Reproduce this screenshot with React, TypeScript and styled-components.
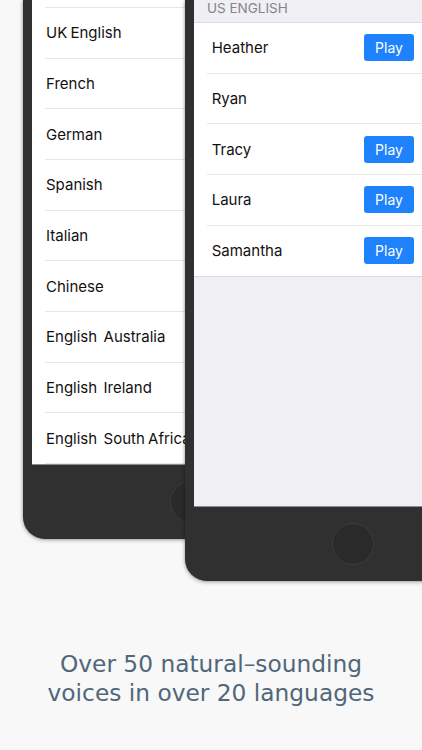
import styled, { createGlobalStyle } from "styled-components";

const GlobalStyle = createGlobalStyle`
  html, body {
    margin: 0;
    padding: 0;
    background: #f8f8f9;
  }
  body {
    width: 422px;
    height: 750px;
    overflow: hidden;
    font-family: "Inter", "Liberation Sans", sans-serif;
  }
`;

const languages = [
  "",
  "UK English",
  "French",
  "German",
  "Spanish",
  "Italian",
  "Chinese",
  "English  Australia",
  "English  Ireland",
  "English  South Africa",
];

const voices = [
  { name: "Heather", play: true },
  { name: "Ryan", play: false },
  { name: "Tracy", play: true },
  { name: "Laura", play: true },
  { name: "Samantha", play: true },
];

export default function App() {
  return (
    <>
      <GlobalStyle />
      <Page>
        <Stage>
          <Phone $height={539} $back>
            <Screen $height={465} $bg="#ffffff">
              <LangList>
                {languages.map((l, i) => (
                  <LangRow key={i}>{l}</LangRow>
                ))}
              </LangList>
            </Screen>
            <Bezel>
              <HomeButton />
            </Bezel>
          </Phone>
          <Phone $height={581}>
            <Screen $height={507} $bg="#efeff4">
              <SectionHeader>US ENGLISH</SectionHeader>
              <VoiceList>
                {voices.map((v) => (
                  <VoiceRow key={v.name}>
                    <VoiceName>{v.name}</VoiceName>
                    {v.play && <PlayButton>Play</PlayButton>}
                  </VoiceRow>
                ))}
              </VoiceList>
            </Screen>
            <Bezel>
              <HomeButton />
            </Bezel>
          </Phone>
        </Stage>
        <Caption>
          Over 50 natural–sounding
          <br />
          voices in over 20 languages
        </Caption>
      </Page>
    </>
  );
}

const Page = styled.div`
  width: 422px;
  height: 750px;
  display: flex;
  flex-direction: column;
`;

const Stage = styled.div`
  height: 600px;
  display: flex;
  align-items: flex-start;
  padding-left: 23px;
  overflow: hidden;
  flex: none;
`;

const Phone = styled.div<{ $height: number; $back?: boolean }>`
  flex: none;
  width: 335px;
  height: ${(p) => p.$height}px;
  margin-right: ${(p) => (p.$back ? "-173px" : "0")};
  z-index: ${(p) => (p.$back ? 0 : 1)};
  box-sizing: border-box;
  padding: 0 9px;
  background: #303030;
  border-radius: 0 0 22px 22px;
  box-shadow: 0 1px 4px rgba(0, 0, 0, 0.35), 0 0 2px rgba(0, 0, 0, 0.2);
  display: flex;
  flex-direction: column;
`;

const Screen = styled.div<{ $height: number; $bg: string }>`
  flex: none;
  height: ${(p) => p.$height}px;
  background: ${(p) => p.$bg};
  overflow: hidden;
  border-bottom: 1px solid #8d8d90;
  box-sizing: border-box;
`;

const Bezel = styled.div`
  flex: 1;
  display: flex;
  align-items: center;
  justify-content: center;
`;

const HomeButton = styled.div`
  width: 40px;
  height: 40px;
  border-radius: 50%;
  background: #2a2a2a;
  border: 1px solid #3b3b3b;
`;

const LangList = styled.div`
  padding-top: 6px;
  border-top: 1px solid transparent;
`;

const LangRow = styled.div`
  height: 50.67px;
  box-sizing: border-box;
  margin-left: 13px;
  padding-left: 1px;
  border-bottom: 1px solid #e6e6e8;
  display: flex;
  align-items: center;
  white-space: pre;
  font-size: 15px;
  word-spacing: -1px;
  color: #111111;
  &:first-child {
    height: 1px;
  }
`;

const SectionHeader = styled.div`
  height: 23px;
  box-sizing: border-box;
  padding-left: 13px;
  font-size: 13.5px;
  line-height: 16px;
  color: #85858a;
  border-bottom: 1px solid #dedee2;
`;

const VoiceList = styled.div`
  background: #ffffff;
  border-bottom: 1px solid #dcdce0;
`;

const VoiceRow = styled.div`
  height: 50.67px;
  box-sizing: border-box;
  margin-left: 12.7px;
  display: grid;
  grid-template-columns: 157.3px 50px;
  align-items: center;
  border-bottom: 1px solid #e6e6e8;
  &:last-child {
    border-bottom: none;
  }
`;

const VoiceName = styled.span`
  padding-left: 5px;
  font-size: 15px;
  color: #111111;
`;

const PlayButton = styled.button`
  width: 50px;
  height: 27px;
  border: none;
  border-radius: 3px;
  background: #1d82fb;
  color: #ffffff;
  font-family: "Inter", "Liberation Sans", sans-serif;
  font-size: 14px;
  padding: 0;
`;

const Caption = styled.div`
  padding-top: 49px;
  text-align: center;
  font-family: "DejaVu Sans", "Liberation Sans", sans-serif;
  font-size: 23.3px;
  line-height: 29px;
  color: #50677a;
`;
